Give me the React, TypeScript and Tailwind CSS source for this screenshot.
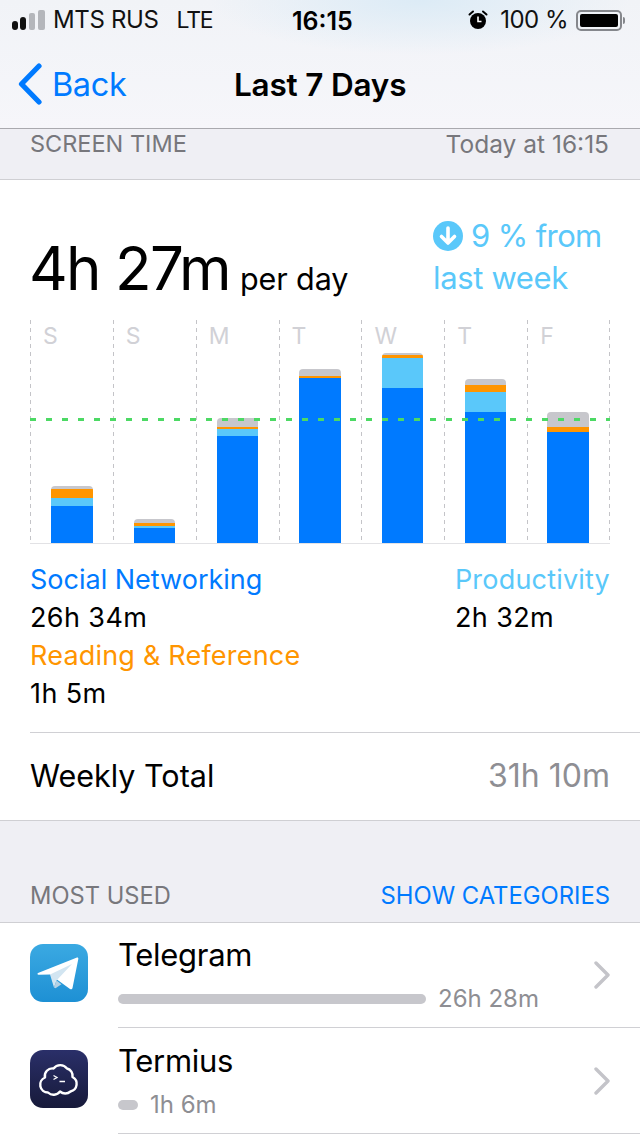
const FONT = "font-['Inter','Liberation_Sans',sans-serif]";

type Bar = { gray: number; orange: number; light: number; blue: number; shift: number; width: number };
const days: { label: string; bar: Bar }[] = [
  { label: "S", bar: { gray: 3, orange: 9, light: 8, blue: 37, shift: 21, width: 42 } },
  { label: "S", bar: { gray: 4, orange: 3, light: 2, blue: 15, shift: 21, width: 41 } },
  { label: "M", bar: { gray: 9, orange: 2, light: 7, blue: 107, shift: 21, width: 41 } },
  { label: "T", bar: { gray: 7, orange: 2, light: 0, blue: 165, shift: 20, width: 42 } },
  { label: "W", bar: { gray: 2, orange: 3, light: 30, blue: 155, shift: 21, width: 41 } },
  { label: "T", bar: { gray: 6, orange: 7, light: 20, blue: 131, shift: 21, width: 41 } },
  { label: "F", bar: { gray: 15, orange: 5, light: 0, blue: 111, shift: 20, width: 42 } },
];

function Signal() {
  return (
    <svg width="34" height="20" viewBox="0 0 34 20" className="shrink-0">
      <rect x="0" y="11" width="6" height="9" rx="3" fill="#111" />
      <rect x="8" y="7" width="6" height="13" rx="3" fill="#111" />
      <rect x="17" y="3" width="6" height="17" rx="2" fill="#b4b6bb" />
      <rect x="26" y="0" width="7" height="20" rx="2" fill="#b4b6bb" />
    </svg>
  );
}

function Alarm() {
  return (
    <svg width="20" height="20" viewBox="0 0 20 20" className="shrink-0">
      <circle cx="10" cy="11" r="8" fill="#000" />
      <path d="M10 6.5V11.5H13.5" stroke="#fff" strokeWidth="1.6" fill="none" />
      <path d="M1.5 4.5L5 1.5M18.5 4.5L15 1.5" stroke="#000" strokeWidth="2" strokeLinecap="round" />
    </svg>
  );
}

function Battery() {
  return (
    <div className="flex items-center">
      <div className="w-[46px] h-[21px] rounded-[5px] border-2 border-[#85878c] p-[2px]">
        <div className="w-full h-full rounded-[2px] bg-black" />
      </div>
      <div className="w-[2px] h-[7px] ml-[1px] rounded-r-sm bg-[#85878c]" />
    </div>
  );
}

function Column({ label, bar }: { label: string; bar: Bar }) {
  return (
    <div className="relative h-full">
      <div className="absolute left-0 top-0 bottom-0 w-px bg-[repeating-linear-gradient(to_bottom,#c4c4c8_0,#c4c4c8_4px,transparent_4px,transparent_8px)]" />
      <div className="pl-[13px] pt-[3px] text-[23px] leading-[26px] text-[#d1d1d6]">{label}</div>
      <div
        className="absolute bottom-0 flex flex-col rounded-t-[4px] overflow-hidden"
        style={{ left: bar.shift, width: bar.width }}
      >
        <div className="bg-[#c7c7cc]" style={{ height: bar.gray }} />
        <div className="bg-[#ff9500]" style={{ height: bar.orange }} />
        <div className="bg-[#5ac8fa]" style={{ height: bar.light }} />
        <div className="bg-[#007aff]" style={{ height: bar.blue }} />
      </div>
    </div>
  );
}

function Chevron() {
  return (
    <svg width="16" height="28" viewBox="0 0 16 28" className="shrink-0">
      <path d="M2 2L14 14L2 26" fill="none" stroke="#c4c4c9" strokeWidth="3.4" strokeLinecap="round" strokeLinejoin="round" />
    </svg>
  );
}

function TelegramIcon() {
  return (
    <div className="w-[58px] h-[58px] shrink-0 rounded-[13px] bg-gradient-to-b from-[#3aa9e2] to-[#1d90d4] flex items-center justify-center">
      <svg width="58" height="58" viewBox="0 0 58 58">
        <path d="M8 29L47 13.5C48 13.2 48.5 14 48.3 15L42.5 44C42.2 45.3 41 45.6 40 44.9L20 30.5L8.5 30.8C7.3 30.5 7.2 29.4 8 29Z" fill="#fff" />
        <path d="M20 30.5L24 43.5L26.5 36.5L42 20L20 30.5Z" fill="#d2e5f1" />
        <path d="M24 43.5L26.5 36.5L31.5 40.2L25.5 44.2Z" fill="#b5d1e4" />
      </svg>
    </div>
  );
}

function TermiusIcon() {
  return (
    <div className="w-[58px] h-[58px] shrink-0 rounded-[13px] bg-gradient-to-b from-[#2a2f69] to-[#171a3a] flex items-center justify-center">
      <svg width="58" height="58" viewBox="0 0 58 58">
        <path
          d="M18 42.5A7.8 7.8 0 0 1 15 27.5A7.5 7.5 0 0 1 23.5 18.5A8.5 8.5 0 0 1 37 18.5A7.5 7.5 0 0 1 42.5 27A7.8 7.8 0 0 1 40.5 41.5A8 8 0 0 1 30 41.5A8 8 0 0 1 18 42.5Z"
          fill="none"
          stroke="#fff"
          strokeWidth="2.4"
          strokeLinejoin="round"
        />
        <path d="M23.5 25.5L27 27.5L23.5 29.5" fill="none" stroke="#fff" strokeWidth="1.3" />
        <path d="M29.5 31.5H35" stroke="#fff" strokeWidth="1.5" />
      </svg>
    </div>
  );
}

function AppRow({
  name,
  barWidth,
  time,
  icon,
  rowClass,
  iconClass,
  textClass,
}: {
  name: string;
  barWidth: number;
  time: string;
  icon: React.ReactNode;
  rowClass: string;
  iconClass: string;
  textClass: string;
}) {
  return (
    <div className="flex items-start pl-[30px]">
      <div className={`w-[88px] shrink-0 ${iconClass}`}>{icon}</div>
      <div className={`flex-1 min-w-0 border-b border-[#d0d0d4] pr-[30px] flex items-center justify-between ${rowClass}`}>
        <div className={`flex flex-col self-start ${textClass}`}>
          <div className="text-[31px] leading-[36px] text-black tracking-[-0.3px]">{name}</div>
          <div className="flex items-center mt-[13px] gap-[12px]">
            <div className="h-[10px] rounded-full bg-[#c7c7cc]" style={{ width: barWidth }} />
            <div className="text-[24px] leading-[26px] text-[#8e8e93]">{time}</div>
          </div>
        </div>
        <Chevron />
      </div>
    </div>
  );
}

export default function App() {
  return (
    <div className={`w-[640px] h-[1136px] overflow-hidden bg-[#efeff4] ${FONT}`}>
      <header className="h-[129px] border-b border-[#a9a9ae] bg-[radial-gradient(ellipse_210px_55px_at_420px_0px,#dcebf6,transparent),linear-gradient(#f1f3f7,#f6f6fa)]">
        <div className="h-[40px] flex items-center justify-between pl-[12px] pr-[15px] relative">
          <div className="flex items-center gap-[7px] text-[24px] text-[#111] tracking-[-0.35px]">
            <Signal />
            <span>MTS RUS</span>
            <span className="ml-[11px] text-[23px] tracking-[-1.2px]">LTE</span>
          </div>
          <div className="absolute left-[292px] top-[6px] text-[25px] leading-[30px] font-semibold text-black">16:15</div>
          <div className="flex items-center gap-[12px]">
            <Alarm />
            <div className="flex items-center gap-[8px]">
              <span className="text-[24px] text-[#111] tracking-[-0.5px]">100 %</span>
              <Battery />
            </div>
          </div>
        </div>
        <div className="h-[88px] relative flex items-start pl-[18px] pt-[23px]">
          <svg width="24" height="42" viewBox="0 0 24 42" className="shrink-0">
            <path d="M21 3L3.5 21L21 39" fill="none" stroke="#007aff" strokeWidth="5.2" strokeLinecap="round" strokeLinejoin="round" />
          </svg>
          <span className="ml-[10px] text-[32.5px] leading-[44px] text-[#007aff] tracking-[-0.4px]">Back</span>
          <span className="absolute left-[234px] top-[27px] text-[31.5px] leading-[36px] font-semibold text-black tracking-[-0.2px]">Last 7 Days</span>
        </div>
      </header>

      <div className="h-[51px] border-b border-[#cfcfd3] pl-[30px] pr-[31px] flex justify-between items-start text-[#77777c]">
        <span className="text-[23.5px] leading-[30px]">SCREEN TIME</span>
        <span className="text-[24.5px] leading-[30px]">Today at 16:15</span>
      </div>

      <section className="h-[641px] bg-white border-b border-[#cfcfd3]">
        <div className="h-[140px] px-[30px] relative">
          <div className="absolute left-[29px] top-[49px] flex items-baseline">
            <span className="text-[60px] leading-[78px] text-black tracking-[-1.7px]">4h 27m</span>
            <span className="ml-[10px] text-[30.5px] text-black tracking-[-0.1px]">per day</span>
          </div>
          <div className="absolute left-[433px] top-[35px] text-[31px] leading-[42px] text-[#5ac8fa] tracking-[-0.35px]">
            <div className="flex items-center">
              <svg width="30" height="30" viewBox="0 0 30 30" className="mr-[8px] shrink-0">
                <circle cx="15" cy="15" r="15" fill="#5ac8fa" />
                <path d="M15 7V22M8.5 15.5L15 22L21.5 15.5" fill="none" stroke="#fff" strokeWidth="3.6" strokeLinecap="round" strokeLinejoin="round" />
              </svg>
              <span className="tracking-[-0.6px]">9 % from</span>
            </div>
            <div>last week</div>
          </div>
        </div>

        <div className="mx-[30px] relative h-[224px] border-b border-[#e2e2e5] grid grid-cols-7">
          {days.map((d, i) => (
            <Column key={i} label={d.label} bar={d.bar} />
          ))}
          <div className="absolute right-0 top-0 bottom-0 w-px bg-[repeating-linear-gradient(to_bottom,#c4c4c8_0,#c4c4c8_4px,transparent_4px,transparent_8px)]" />
          <div className="absolute left-0 right-0 top-[98px] h-[3px] bg-[repeating-linear-gradient(to_right,#4cd964_0,#4cd964_6px,transparent_6px,transparent_16px)]" />
        </div>

        <div className="mx-[30px] mt-[17px] flex justify-between text-[27px] leading-[38px]">
          <div>
            <div className="text-[#007aff]">Social Networking</div>
            <div className="text-black tracking-[0.4px]">26h 34m</div>
            <div className="text-[#ff9500] tracking-[0.2px]">Reading &amp; Reference</div>
            <div className="text-black tracking-[0.4px]">1h 5m</div>
          </div>
          <div>
            <div className="text-[#5ac8fa] tracking-[0.2px]">Productivity</div>
            <div className="text-black tracking-[0.4px]">2h 32m</div>
          </div>
        </div>

        <div className="ml-[30px] mt-[19px] h-[88px] border-t border-[#d0d0d4] pr-[30px] pb-[2px] flex items-center justify-between">
          <span className="text-[30.5px] text-black">Weekly Total</span>
          <span className="text-[32px] text-[#8e8e93]">31h 10m</span>
        </div>
      </section>

      <div className="h-[102px] border-b border-[#cfcfd3] px-[30px] flex items-end justify-between pb-[11px] leading-[30px]">
        <span className="text-[23.7px] text-[#77777c]">MOST USED</span>
        <span className="text-[23.8px] text-[#007aff]">SHOW CATEGORIES</span>
      </div>

      <div className="bg-white h-[300px]">
        <AppRow
          name="Telegram"
          barWidth={308}
          time="26h 28m"
          icon={<TelegramIcon />}
          rowClass="h-[105px]"
          iconClass="pt-[21px]"
          textClass="pt-[14px]"
        />
        <AppRow
          name="Termius"
          barWidth={20}
          time="1h 6m"
          icon={<TermiusIcon />}
          rowClass="h-[106px]"
          iconClass="pt-[22px]"
          textClass="pt-[15px]"
        />
      </div>
    </div>
  );
}
